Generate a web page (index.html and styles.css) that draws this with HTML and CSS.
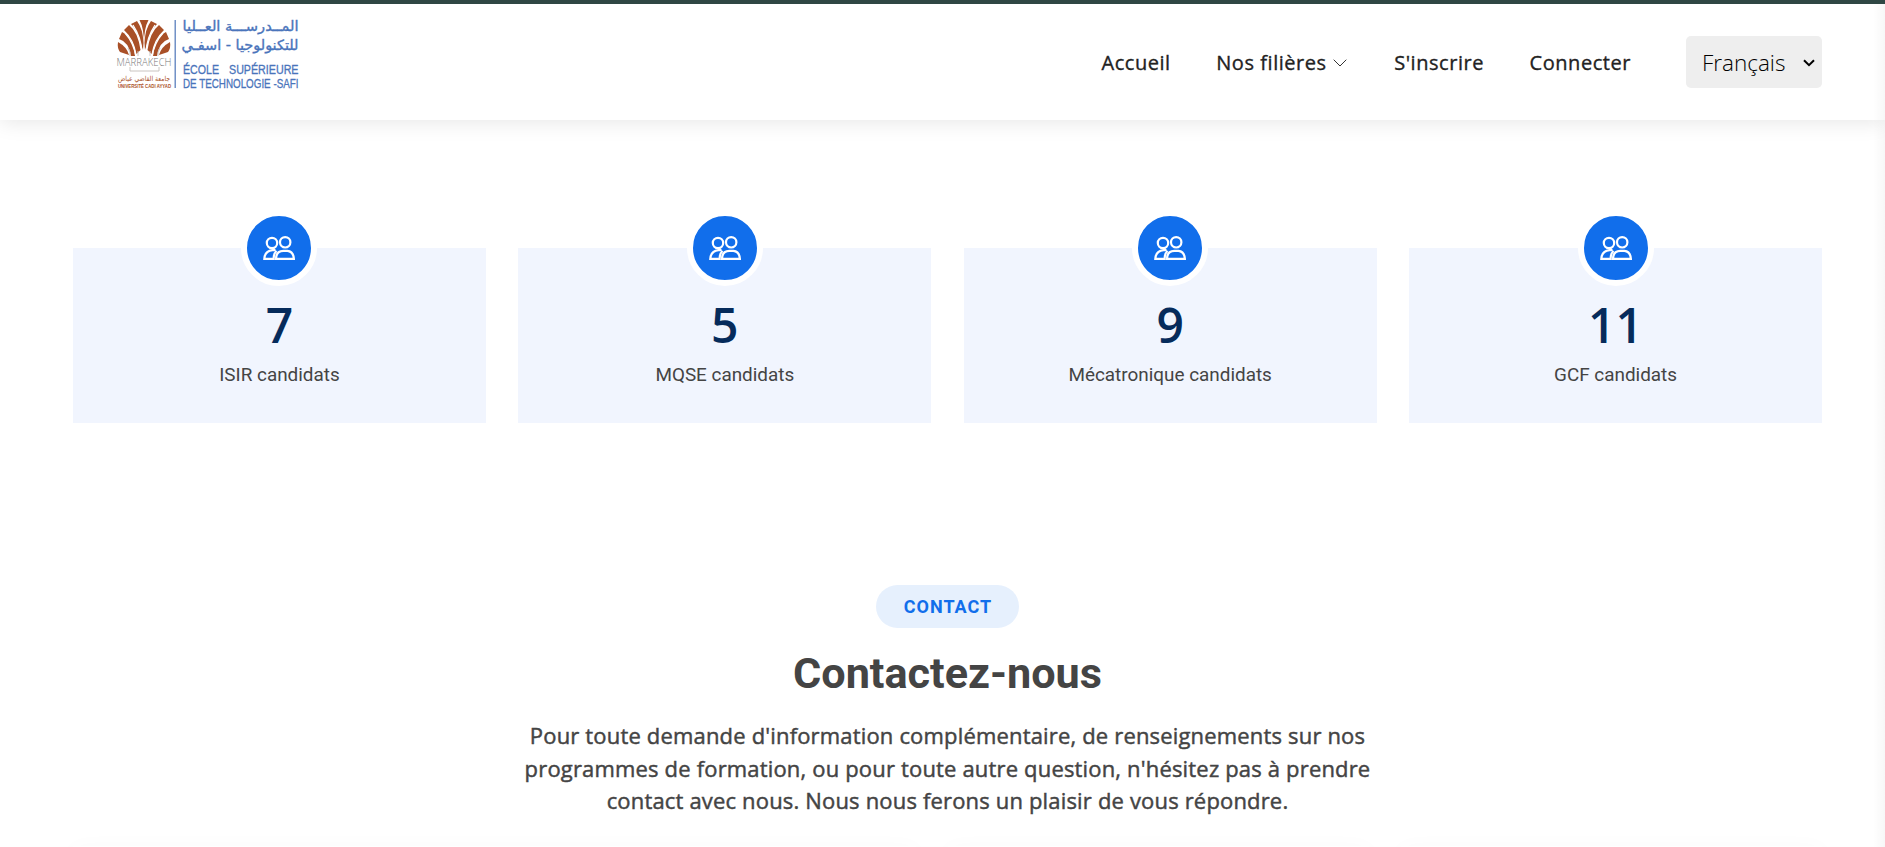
FILE: index.html
```html
<!DOCTYPE html>
<html lang="fr">
<head>
<meta charset="utf-8">
<title>École Supérieure de Technologie - Safi</title>
<link rel="stylesheet" href="styles.css">
</head>
<body>
<svg class="sprite" aria-hidden="true">
  <symbol id="group" viewBox="0 0 32 24">
    <g fill="none" stroke="#fff" stroke-width="2.2">
      <circle cx="9" cy="7" r="5.2"/>
      <circle cx="22.2" cy="6.300" r="5.2"/>
      <path d="M12.500 14.200H9.500Q1.600 15.300 1.300 22.800H10.700Q10.500 17.500 13.600 15"/>
      <path d="M13 22.800Q13.200 15 20.400 14.900H24.400Q30.400 15.500 30.900 22.800Z"/>
    </g>
  </symbol>
</svg>
<header class="header">
  <a class="logo" href="#">
    <svg width="200" height="84" viewBox="-6 -10 200 84">
      <g fill="#a95027">
        <path d="M12 35Q10 27 1 22Q0 28 3 32Z"/>
        <path d="M14 36Q12 22 2 19L5 12Q16 17 18 36Z"/>
        <path d="M19.500 34Q17 19 7 10L12 5Q21 12 23.500 30Z"/>
        <path d="M23.500 23Q21 11 14 4L20 1Q26 9 26.500 23L26 30Z"/>
        <path d="M27 24Q27 8 22.500 0H31.500Q27 8 27 24Z"/>
        <path d="M30.500 23Q33 11 40 4L34 1Q28 9 27.500 23L28 30Z"/>
        <path d="M34.500 34Q37 19 47 10L42 5Q33 12 30.500 30Z"/>
        <path d="M40 36Q42 22 52 19L49 12Q38 17 36 36Z"/>
        <path d="M42 35Q44 27 53 22Q54 28 51 32Z"/>
      </g>
      <g fill="none" stroke="#fff" stroke-width="1.3">
        <path d="M8 13Q17 23 19 37M16 5Q24 17 25 32M38 5Q30 17 29 32M46 13Q37 23 35 37"/>
      </g>
      <path d="M13 47V51H42V47M13 36Q14 32 11 28M41 36Q40 32 43 28M21 36V31M33 36V31" fill="none" stroke="#c9c4c1" stroke-width="1"/>
      <text class="logo-city" x="-.5" y="46" textLength="55" lengthAdjust="spacingAndGlyphs">MARRAKECH</text>
      <text class="logo-uni-ar" x="27" y="60.500" text-anchor="middle" textLength="52" lengthAdjust="spacingAndGlyphs">جامعة القاضي عياض</text>
      <text class="logo-uni" x="1" y="67.500" textLength="53" lengthAdjust="spacingAndGlyphs">UNIVERSITÉ CADI AYYAD</text>
      <path d="M58.200 0V68" stroke="#5a7fbd" stroke-width="1.3"/>
      <text class="logo-ar" x="123.500" y="11" text-anchor="middle" textLength="116" lengthAdjust="spacingAndGlyphs">المــدرســـة العــليا</text>
      <text class="logo-ar" x="123" y="29.500" text-anchor="middle" textLength="117" lengthAdjust="spacingAndGlyphs">للتكنولوجيا - اسفـي</text>
      <text class="logo-fr" x="66" y="54" textLength="36" lengthAdjust="spacingAndGlyphs">ÉCOLE</text>
      <text class="logo-fr" x="112" y="54" textLength="69.500" lengthAdjust="spacingAndGlyphs">SUPÉRIEURE</text>
      <text class="logo-fr" x="66" y="67.500" textLength="115.500" lengthAdjust="spacingAndGlyphs">DE TECHNOLOGIE -SAFI</text>
    </svg>
  </a>
  <nav class="nav">
    <a href="#">Accueil</a>
    <a href="#">Nos filières <svg class="chevron" width="14" height="8" viewBox="0 0 14 8"><path d="M.7.7 7 7 13.300.7" fill="none" stroke="#333" stroke-width="1"/></svg></a>
    <a href="#">S'inscrire</a>
    <a href="#">Connecter</a>
    <button class="lang" type="button">Français
      <svg width="12" height="8" viewBox="0 0 12 8"><path d="M1 1.200 6 6.200 11 1.200" fill="none" stroke="#000" stroke-width="2"/></svg>
    </button>
  </nav>
</header>
<main>
  <section class="stats">
    <div class="stat"><span class="stat-icon"><svg width="32" height="24"><use href="#group"/></svg></span><span class="count">7</span><p>ISIR candidats</p></div>
    <div class="stat"><span class="stat-icon"><svg width="32" height="24"><use href="#group"/></svg></span><span class="count">5</span><p>MQSE candidats</p></div>
    <div class="stat"><span class="stat-icon"><svg width="32" height="24"><use href="#group"/></svg></span><span class="count">9</span><p>Mécatronique candidats</p></div>
    <div class="stat"><span class="stat-icon"><svg width="32" height="24"><use href="#group"/></svg></span><span class="count">11</span><p>GCF candidats</p></div>
  </section>
  <section class="contact">
    <h2 class="badge">CONTACT</h2>
    <h3 class="title">Contactez-nous</h3>
    <p class="intro">Pour toute demande d'information complémentaire, de renseignements sur nos<br>programmes de formation, ou pour toute autre question, n'hésitez pas à prendre<br>contact avec nous. Nous nous ferons un plaisir de vous répondre.</p>
    <div class="panels"><div class="panel"></div><div class="panel"></div><div class="panel"></div></div>
  </section>
</main>
<div class="edge"></div>
</body>
</html>
```
FILE: styles.css
```css
* { box-sizing: border-box; }
html, body { height: 847px; overflow: hidden; }
body {
  margin: 0;
  position: relative;
  background: #fff;
  color: #444;
  font-family: "Open Sans", sans-serif;
}
.sprite { position: absolute; width: 0; height: 0; }
.header {
  height: 120px;
  border-top: 4px solid #2f4744;
  background: #fff;
  box-shadow: 0 2px 20px rgba(0, 0, 0, .1);
  display: flex;
  justify-content: space-between;
  align-items: flex-start;
  padding: 0 63px 0 111px;
}
.logo { margin-top: 6px; line-height: 0; }
.logo svg { overflow: visible; }
.logo-city { font: 300 10.500px "Open Sans", sans-serif; fill: #777; }
.logo-uni-ar { font: 7px "DejaVu Sans", sans-serif; fill: #a95027; }
.logo-uni { font: bold 5.500px "Liberation Sans", sans-serif; fill: #a95027; }
.logo-ar { font: 14px "DejaVu Sans", sans-serif; fill: #4a74bb; stroke: #4a74bb; stroke-width: .35px; direction: rtl; }
.logo-fr { font: 12.500px "Liberation Sans", sans-serif; fill: #4a74bb; stroke: #4a74bb; stroke-width: .3px; }
.nav { display: flex; align-items: center; margin-top: 32px; }
.nav a {
  color: #222;
  text-decoration: none;
  font-size: 20px;
  font-weight: 500;
  -webkit-text-stroke: .35px #222;
  letter-spacing: .55px;
  line-height: 28px;
  margin: 2px 45.500px 0 0;
  white-space: nowrap;
}
.chevron { margin: 0 1.200px 0 1px; vertical-align: 3px; }
.nav a:nth-of-type(4) { margin-right: 55px; }
.lang {
  width: 136px;
  height: 52px;
  border: 0;
  border-radius: 5px;
  background: #eee;
  color: #000;
  font: 300 22.500px "Open Sans", sans-serif;
  display: flex;
  align-items: center;
  justify-content: space-between;
  padding: 1px 7px 0 16px;
}
.stats {
  display: grid;
  grid-template-columns: repeat(4, 1fr);
  gap: 32.400px;
  padding: 128px 63px 0 73px;
}
.stat {
  height: 175px;
  background: #f1f5fe;
  display: flex;
  flex-direction: column;
  align-items: center;
}
.stat-icon {
  width: 76px;
  height: 76px;
  flex: none;
  margin-top: -38px;
  border: 6px solid #fff;
  border-radius: 50%;
  background: #116eeb;
  display: flex;
  align-items: center;
  justify-content: center;
}
.count { margin-top: 5px; font-size: 48px; font-weight: 600; line-height: 68px; color: #062b5b; }
.stat p { margin: 4px 0 0; font: 18.900px/24px Roboto, sans-serif; }
.contact {
  padding: 162px 63px 0 73px;
  display: flex;
  flex-direction: column;
  align-items: center;
}
.badge {
  margin: 0;
  height: 43px;
  padding: 0 27px 0 28px;
  border-radius: 22px;
  background: #e6f0fd;
  color: #116eeb;
  font: 700 18px/44px Roboto, sans-serif;
  letter-spacing: 1px;
}
.title { margin: 20px 0 0; font: 700 43.200px/52px Roboto, sans-serif; }
.intro {
  margin: 19px 0 0;
  font-size: 22px;
  font-weight: 500;
  -webkit-text-stroke: .45px #444;
  letter-spacing: .17px;
  line-height: 32.500px;
  text-align: center;
}
.panels { align-self: stretch; display: grid; grid-template-columns: 2fr 1fr 1fr; gap: 32px; margin-top: 29px; }
.panel { height: 7px; background: #fff; box-shadow: 0 8px 24px rgba(0, 0, 0, .07); }
.edge {
  position: absolute;
  top: 4px;
  right: 0;
  bottom: 0;
  width: 12px;
  background: linear-gradient(to right, rgba(0, 0, 0, 0), rgba(0, 0, 0, .03));
}
```
